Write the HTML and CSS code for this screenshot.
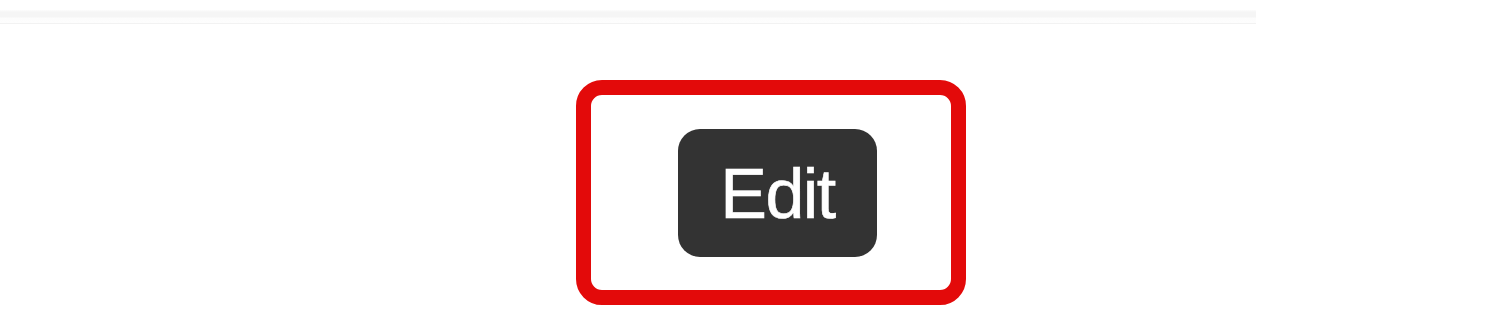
FILE: index.html
```html
<!DOCTYPE html>
<html lang="en">

<head>
    <meta charset="UTF-8">
    <meta name="viewport" content="width=device-width, initial-scale=1.0">
    <title>Edit</title>
    <link rel="stylesheet" href="styles.css">
</head>

<body>
    <div class="topbar">
        <div class="topbar_shade"></div>
        <div class="topbar_line"></div>
    </div>
    <div class="stage">
        <div class="highlight">
            <a href="javascript:;" class="edit_btn">Edit</a>
        </div>
    </div>
</body>

</html>
```

FILE: styles.css
```css
* {
    margin: 0;
    padding: 0;
    box-sizing: border-box;
}

body {
    background: #fff;
    font-family: "Liberation Sans", Arial, sans-serif;
}

body a {
    text-decoration: none;
}

.topbar {
    width: 1256px;
    padding-top: 10px;
}

.topbar_shade {
    height: 13px;
    background: linear-gradient(#fcfcfc 0, #f5f5f5 2px, #f5f5f5 7px, #fcfcfc 8px, #fdfdfd 13px);
}

.topbar_line {
    height: 1px;
    background: #f2f2f2;
}

.stage {
    padding: 56px 0 0 576px;
}

.highlight {
    width: 390px;
    height: 225px;
    border: 15px solid #e30a0a;
    border-radius: 26px;
    display: flex;
    align-items: center;
    padding-left: 87px;
}

.edit_btn {
    width: 199px;
    height: 128px;
    background: #333333;
    border-radius: 22px;
    color: #ffffff;
    font-size: 70px;
    letter-spacing: -1.5px;
    display: flex;
    align-items: center;
    justify-content: center;
    padding-top: 2px;
    -webkit-text-stroke: 0.6px #ffffff;
}
```
